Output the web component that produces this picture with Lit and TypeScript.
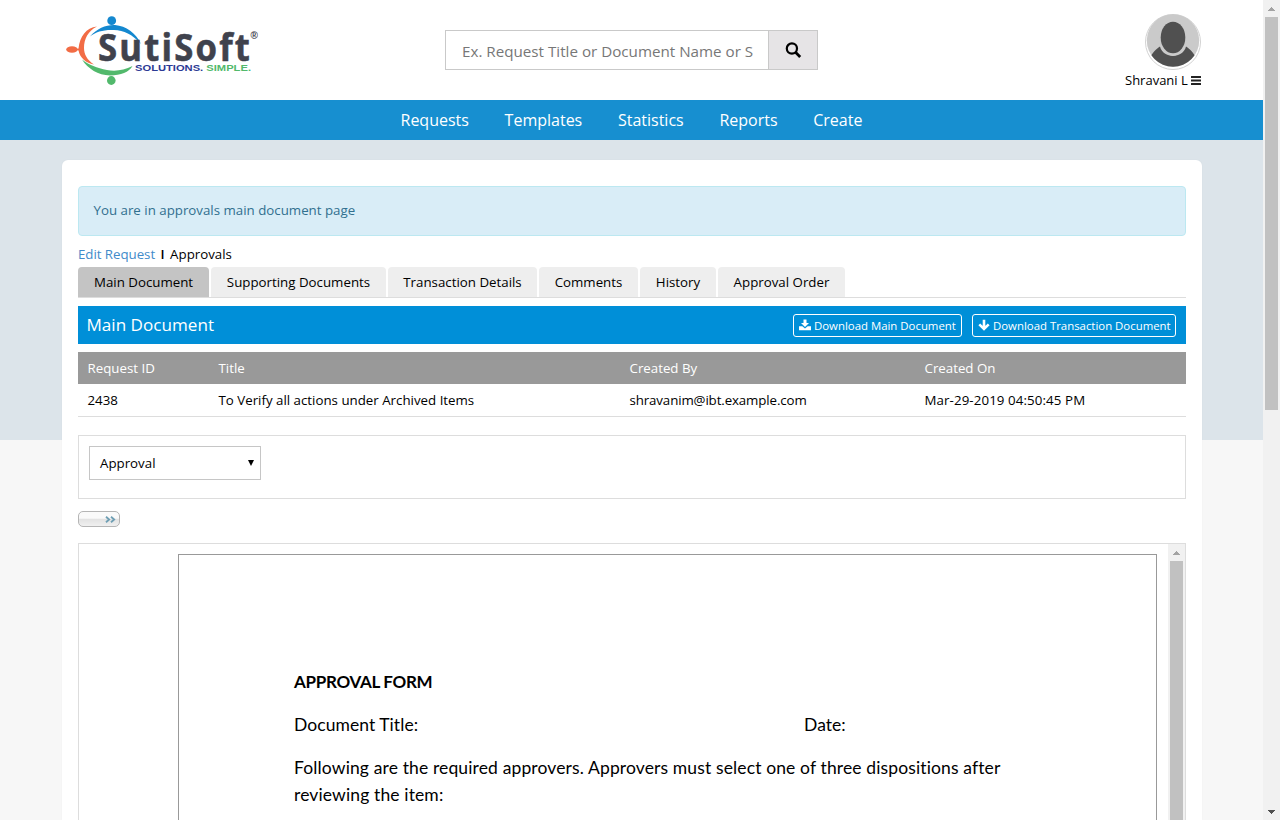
import { LitElement, html, css, svg } from "lit";
import { customElement } from "lit/decorators.js";

const NAV = ["Requests", "Templates", "Statistics", "Reports", "Create"];

const TABS = [
  { label: "Main Document", width: 131 },
  { label: "Supporting Documents", width: 175 },
  { label: "Transaction Details", width: 149 },
  { label: "Comments", width: 99 },
  { label: "History", width: 76 },
  { label: "Approval Order", width: 127 },
];

const logo = html`<svg class="logo" viewBox="0 0 200 74" width="200" height="74">
  <circle cx="51.7" cy="9.700" r="4.400" fill="#1488cf" />
  <path d="M30 25.500 C37 17 47 13.500 55 14 C66 15 76 22 81 33 C72 23 64 19.500 54 19 C44 18.500 36 20.500 30 25.500Z" fill="#1488cf" />
  <ellipse cx="12" cy="38.500" rx="5.800" ry="3.200" fill="#f26c45" />
  <path d="M37 15.500 C26 17 20 25 18.500 37.500 L16 38.500 L18.500 39.500 C20 47 26 52 34 53.500 C27 49 24 43 24 37 C24 28 28 20 37 15.500Z" fill="#f26c45" />
  <path d="M22 48.500 C28 58 38 64 50 64.500 C61 64.500 69 61 72.500 55 C64 59.500 55 60.500 47 59 C37 57 29 54 22 48.500Z" fill="#52b96c" />
  <ellipse cx="51.300" cy="69.500" rx="4.300" ry="4.400" fill="#52b96c" />
  <text class="brand" x="38" y="50.300" textLength="154" lengthAdjust="spacingAndGlyphs">SutiSoft</text>
  <text class="reg" x="190.500" y="28">®</text>
  <text class="slogan" x="75" y="60.300" textLength="116" lengthAdjust="spacingAndGlyphs">SOLUTIONS. <tspan class="green">SIMPLE.</tspan></text>
</svg>`;

const searchIcon = html`<svg width="17" height="17" viewBox="0 0 17 17" fill="none" stroke="#000">
  <circle cx="6.900" cy="6.500" r="5.100" stroke-width="2.200" />
  <path d="M10.500 10.200 L15.200 14.900" stroke-width="2.800" />
</svg>`;

const avatar = html`<svg class="avatar" width="56" height="56" viewBox="0 0 56 56">
  <defs><clipPath id="disc"><circle cx="28" cy="26.500" r="26.200" /></clipPath></defs>
  <circle cx="28" cy="28" r="27.500" fill="#fff" stroke="#d2d2d2" />
  <g clip-path="url(#disc)">
    <rect width="56" height="56" fill="#cacaca" />
    <path d="M4 46 C7 39 11 35 15 32.500 C18 45 38 45 41 32.500 C45 35 49 39 52 46 L52 56 L4 56Z" fill="#505050" />
    <ellipse cx="28" cy="23.500" rx="14" ry="18.200" fill="#cacaca" />
    <ellipse cx="28" cy="23.500" rx="12.300" ry="15.800" fill="#505050" />
  </g>
</svg>`;

const menuIcon = html`<svg width="10" height="9" viewBox="0 0 10 9" fill="#222">
  <rect width="10" height="2" rx=".3" /><rect y="3.500" width="10" height="2" rx=".3" /><rect y="7" width="10" height="2" rx=".3" />
</svg>`;

const downloadIcon = html`<svg width="12" height="12" viewBox="0 0 12 12" fill="#fff">
  <path d="M4.500 0.500h3v3.500h2.500L6 8 2 4h2.500z" />
  <path d="M0 7.300h3.300L6 9.600l2.700-2.300H12v3.900H0z" />
</svg>`;

const arrowIcon = html`<svg width="12" height="12" viewBox="0 0 12 12" fill="none" stroke="#fff" stroke-width="2.600">
  <path d="M6 0.800v8.500M1.300 5.400L6 10l4.700-4.600" />
</svg>`;

const chevrons = html`<svg width="11" height="7" viewBox="0 0 11 7" fill="none" stroke="#6f9fb4" stroke-width="1.800">
  <path d="M1 .7L4.200 3.500 1 6.300M6 .7L9.200 3.500 6 6.300" />
</svg>`;

const triangleUp = svg`<path d="M3 0h1v1h1v1h1v1h1v1h-7v-1h1v-1h1v-1h1z" />`;

@customElement("scroll-rail")
export class ScrollRail extends LitElement {
  static properties = { thumb: { type: Number }, down: { type: Boolean } };
  declare thumb: number;
  declare down: boolean;

  static styles = css`
    :host {
      display: flex;
      flex-direction: column;
      width: 17px;
      flex: none;
      background: #f1f1f1;
    }
    .end {
      height: 17px;
      flex: none;
      display: flex;
      align-items: center;
      justify-content: center;
    }
    .thumb {
      width: 13px;
      margin: 0 auto;
      background: #c1c1c1;
      flex: none;
    }
    .fill {
      flex: 1;
    }
    .flip {
      transform: rotate(180deg);
    }
  `;

  render() {
    return html`
      <div class="end"><svg width="7" height="4" viewBox="0 0 7 4" fill="#a3a3a3">${triangleUp}</svg></div>
      <div class="thumb" style="height:${this.thumb}px"></div>
      <div class="fill"></div>
      ${this.down
        ? html`<div class="end"><svg class="flip" width="7" height="4" viewBox="0 0 7 4" fill="#505050">${triangleUp}</svg></div>`
        : ""}
    `;
  }
}

@customElement("app-root")
export class AppRoot extends LitElement {
  static styles = css`
    * {
      box-sizing: border-box;
    }
    :host {
      display: flex;
      width: 1280px;
      height: 820px;
      overflow: hidden;
      font: 13.3px/20px "Open Sans", "Noto Sans", sans-serif;
      color: #000;
    }
    svg {
      display: block;
      flex: none;
    }
    .page {
      width: 1263px;
      height: 820px;
      display: flex;
      flex-direction: column;
      overflow: hidden;
      background: linear-gradient(#dce4ea 440px, #f7f7f7 440px);
    }
    .header {
      height: 100px;
      flex: none;
      background: #fff;
      display: flex;
      padding: 0 61px 0 60px;
    }
    .logo {
      margin: 11px 0 0 0;
      overflow: visible;
    }
    .brand {
      font: bold 38px "Open Sans", sans-serif;
      letter-spacing: 2.4px;
      fill: #3f424d;
      stroke: #3f424d;
      stroke-width: 0.6px;
    }
    .reg {
      font: bold 10px "Liberation Sans", sans-serif;
      fill: #3f424d;
    }
    .slogan {
      font: bold 8.8px "Liberation Sans", sans-serif;
      fill: #2c3a94;
    }
    .green {
      fill: #52b96c;
    }
    .search {
      margin: 30px 0 0 185px;
      width: 373px;
      height: 40px;
      display: flex;
      border: 1px solid #c9c9c9;
    }
    .query {
      width: 323px;
      padding-left: 16px;
      font-size: 15.2px;
      line-height: 40px;
      color: #777;
      white-space: nowrap;
      border-right: 1px solid #c9c9c9;
    }
    .go {
      flex: 1;
      display: flex;
      align-items: center;
      justify-content: center;
      background: #e6e4e6;
    }
    .user {
      margin: 14px 0 0 auto;
      width: 77px;
    }
    .avatar {
      margin-left: 20px;
    }
    .name {
      display: flex;
      align-items: center;
      gap: 3.5px;
      font-size: 13px;
      white-space: nowrap;
    }
    .nav {
      height: 40px;
      flex: none;
      display: flex;
      gap: 35.7px;
      padding-left: 400.5px;
      background: #178fd0;
      color: #fff;
      font-size: 16px;
      line-height: 40px;
    }
    .card {
      width: 1140px;
      flex: 1;
      margin: 20px 0 0 62px;
      padding: 26px 16px 0;
      background: #fff;
      border-radius: 6px 6px 0 0;
      box-shadow: 0 0 2px rgba(0, 0, 0, 0.04);
      overflow: hidden;
    }
    .alert {
      height: 50px;
      border: 1px solid #bce8f1;
      border-radius: 4px;
      background: #d9edf7;
      color: #31708f;
      padding: 13px 14.5px;
    }
    .crumbs {
      display: flex;
      height: 31px;
      padding-top: 8px;
    }
    .link {
      color: #428bca;
      letter-spacing: -0.04px;
    }
    .sep {
      width: 15px;
      text-align: center;
      font-weight: 600;
    }
    .tabs {
      display: flex;
      gap: 2px;
      height: 31px;
      border-bottom: 1px solid #ddd;
    }
    .tab {
      height: 30px;
      line-height: 30px;
      text-align: center;
      white-space: nowrap;
      border-radius: 4px 4px 0 0;
      background: #eee;
    }
    .active {
      background: #c4c4c4;
    }
    .bar {
      margin-top: 8px;
      height: 38px;
      display: flex;
      align-items: center;
      gap: 10px;
      padding: 0 10px 0 8.5px;
      background: #008fd8;
      color: #fff;
    }
    .heading {
      margin-right: auto;
      font-size: 17.1px;
    }
    .btn {
      height: 23px;
      width: 169px;
      display: flex;
      align-items: center;
      gap: 3px;
      padding-left: 5px;
      border: 1px solid #fff;
      border-radius: 3px;
      font-size: 11.4px;
      white-space: nowrap;
    }
    .btn span {
      padding-top: 1px;
    }
    .wide {
      width: 204px;
    }
    .row {
      display: grid;
      grid-template-columns: 131px 411px 295px 1fr;
      padding-left: 9.500px;
      height: 33px;
      line-height: 33px;
      border-bottom: 1px solid #ddd;
    }
    .head {
      margin-top: 8px;
      height: 32px;
      background: #999;
      color: #fff;
      border: 0;
    }
    .mail {
      letter-spacing: -0.12px;
    }
    .date {
      letter-spacing: 0.1px;
    }
    .filter {
      margin-top: 18px;
      height: 64px;
      padding: 10px;
      border: 1px solid #ddd;
    }
    .select {
      width: 172px;
      height: 34px;
      display: flex;
      align-items: center;
      justify-content: space-between;
      padding: 0 6px 0 10px;
      border: 1px solid #c6c6c6;
    }
    .toggle {
      margin-top: 12px;
      width: 41.5px;
      height: 16px;
      display: flex;
      align-items: center;
      justify-content: flex-end;
      padding-right: 3px;
      border: 1px solid #b5b5b5;
      border-radius: 5px;
      background: linear-gradient(#fafafa 45%, #e2e2e2 50%, #f0f0f0);
    }
    .viewer {
      margin-top: 16px;
      height: 300px;
      display: flex;
      border: 1px solid #ddd;
    }
    .sheet {
      width: 979px;
      margin: 10px 11px 0 99px;
      padding: 113px 115px 0;
      border: 1px solid #999;
      font: 17.5px/27px Lato, sans-serif;
      letter-spacing: 0.13px;
    }
    .title {
      font-size: 17px;
      font-weight: 700;
      letter-spacing: -0.3px;
      margin-bottom: 16px;
    }
    .fields {
      display: grid;
      grid-template-columns: 510px 1fr;
      margin-bottom: 16px;
      letter-spacing: 0.06px;
    }
    .line {
      white-space: nowrap;
    }
  `;

  render() {
    return html`
      <div class="page">
        <div class="header">
          ${logo}
          <div class="search">
            <div class="query">Ex. Request Title or Document Name or S</div>
            <div class="go">${searchIcon}</div>
          </div>
          <div class="user">
            ${avatar}
            <div class="name">Shravani L ${menuIcon}</div>
          </div>
        </div>
        <div class="nav">${NAV.map((n) => html`<span>${n}</span>`)}</div>
        <div class="card">
          <div class="alert">You are in approvals main document page</div>
          <div class="crumbs"><span class="link">Edit Request</span><span class="sep">I</span><span>Approvals</span></div>
          <div class="tabs">
            ${TABS.map((t, i) => html`<div class="tab ${i === 0 ? "active" : ""}" style="width:${t.width}px">${t.label}</div>`)}
          </div>
          <div class="bar">
            <span class="heading">Main Document</span>
            <div class="btn">${downloadIcon}<span>Download Main Document</span></div>
            <div class="btn wide">${arrowIcon}<span>Download Transaction Document</span></div>
          </div>
          <div class="row head"><span>Request ID</span><span>Title</span><span>Created By</span><span>Created On</span></div>
          <div class="row">
            <span>2438</span><span>To Verify all actions under Archived Items</span><span class="mail">shravanim@ibt.example.com</span><span class="date">Mar-29-2019 04:50:45 PM</span>
          </div>
          <div class="filter">
            <div class="select">
              <span>Approval</span>
              <svg width="6" height="8" viewBox="0 0 6 8"><path d="M0 1h6L3 7z" /></svg>
            </div>
          </div>
          <div class="toggle">${chevrons}</div>
          <div class="viewer">
            <div class="sheet">
              <div class="title">APPROVAL FORM</div>
              <div class="fields"><span>Document Title:</span><span>Date:</span></div>
              <div class="line">Following are the required approvers. Approvers must select one of three dispositions after</div>
              <div class="line">reviewing the item:</div>
            </div>
            <scroll-rail .thumb=${400}></scroll-rail>
          </div>
        </div>
      </div>
      <scroll-rail .thumb=${393} .down=${true}></scroll-rail>
    `;
  }
}
